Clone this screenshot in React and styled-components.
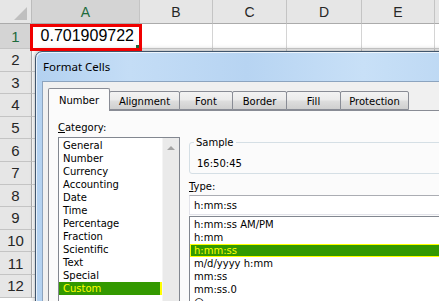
import React from "react";
import styled, { createGlobalStyle } from "styled-components";

const Global = createGlobalStyle`
  html, body { margin: 0; padding: 0; background: #fff; overflow: hidden; }
  #root { width: 439px; height: 301px; }
`;

const Page = styled.div`
  position: relative;
  width: 439px;
  height: 301px;
  overflow: hidden;
  background: #fff;
  font-family: "Liberation Sans", Arial, sans-serif;
`;

const Sheet = styled.div`
  display: grid;
  grid-template-columns: 32px 108px 73px 74px 75px 73px 1fr;
  grid-template-rows: 24px 25px repeat(11, 22.6px);
`;

const Corner = styled.div`
  position: relative;
  background: #e6e6e6;
  border-right: 1px solid #bcbcbc;
  border-bottom: 1px solid #ababab;
  box-sizing: border-box;
  overflow: hidden;
  &::after {
    content: "";
    position: absolute;
    right: 4px;
    bottom: 3px;
    border-left: 13px solid transparent;
    border-bottom: 13px solid #bfbfbf;
  }
`;

const ColHead = styled.div`
  display: flex;
  align-items: center;
  justify-content: center;
  box-sizing: border-box;
  background: ${(p) => (p.$active ? "#d4d4d4" : "#e6e6e6")};
  color: ${(p) => (p.$active ? "#1e6a3c" : "#262626")};
  border-right: 1px solid #c4c4c4;
  border-bottom: 1px solid #ababab;
  font-size: 14px;
`;

const RowHead = styled.div`
  display: flex;
  align-items: center;
  justify-content: center;
  box-sizing: border-box;
  background: ${(p) => (p.$active ? "#d4d4d4" : "#e6e6e6")};
  color: ${(p) => (p.$active ? "#1e6a3c" : "#262626")};
  border-right: 1px solid #ababab;
  border-bottom: 1px solid #c4c4c4;
  font-size: 15px;
`;

const Cell = styled.div`
  display: flex;
  align-items: center;
  justify-content: flex-end;
  box-sizing: border-box;
  padding-right: 5px;
  border-right: 1px solid #d4d4d4;
  border-bottom: 1px solid #d4d4d4;
  font-size: 16px;
  color: #000;
`;

const SelectBox = styled.div`
  position: absolute;
  left: 30px;
  top: 24px;
  width: 112px;
  height: 27px;
  box-sizing: border-box;
  border: 3px solid #f00000;
  z-index: 5;
  &::after {
    content: "";
    position: absolute;
    right: 0px;
    bottom: 0px;
    width: 3px;
    height: 3px;
    background: #1e6a3c;
  }
`;

/* ---------- Dialog ---------- */

const Window = styled.div`
  position: absolute;
  left: 35px;
  top: 51px;
  width: 470px;
  height: 290px;
  box-sizing: border-box;
  border: 1px solid #41566d;
  border-radius: 7px 7px 0 0;
  background: linear-gradient(90deg, #b3d1f0 0%, #c4ddf6 20%, #b7d4f2 45%, #c8e0f7 70%, #b6d3f1 100%);
  box-shadow: 0 -1px 5px rgba(0, 0, 0, 0.35), inset 1px 1px 0 rgba(255, 255, 255, 0.7);
  display: flex;
  flex-direction: column;
  padding: 0 0 0 6px;
  z-index: 3;
  font-family: "DejaVu Sans", Verdana, sans-serif;
  font-size: 10px;
  color: #000;
`;

const TitleBar = styled.div`
  height: 29px;
  display: flex;
  align-items: center;
  padding-left: 1px;
  font-family: "Noto Sans", "Open Sans", sans-serif;
  font-size: 11.5px;
  color: #000;
`;

const Client = styled.div`
  flex: 1;
  background: #f0f0f0;
  border: 1px solid #8ca4bf;
  border-right: none;
  border-bottom: none;
  padding: 6px 0 0 5px;
  display: flex;
  flex-direction: column;
`;

const TabStrip = styled.div`
  display: flex;
  align-items: flex-end;
  height: 22px;
  position: relative;
  z-index: 1;
`;

const Tab = styled.div`
  box-sizing: border-box;
  width: ${(p) => p.$w}px;
  height: ${(p) => (p.$active ? 23 : 19)}px;
  margin-left: -1px;
  margin-bottom: ${(p) => (p.$active ? -1 : 0)}px;
  &:first-child { margin-left: 0; }
  border: 1px solid #898c95;
  border-bottom: ${(p) => (p.$active ? "none" : "1px solid #898c95")};
  border-radius: 2px 2px 0 0;
  background: ${(p) =>
    p.$active
      ? "#fbfbfb"
      : "linear-gradient(180deg, #f3f3f3 0%, #ebebeb 45%, #dddddd 55%, #cfcfcf 100%)"};
  display: flex;
  align-items: center;
  justify-content: center;
  padding-top: ${(p) => (p.$active ? 0 : 1)}px;
  position: relative;
  z-index: ${(p) => (p.$active ? 2 : 1)};
`;

const TabPage = styled.div`
  flex: 1;
  border: 1px solid #898c95;
  border-right: none;
  border-bottom: none;
  background: #fbfbfb;
  display: flex;
  gap: 9px;
  padding: 10px 0 0 9px;
`;

const Column = styled.div`
  display: flex;
  flex-direction: column;
  flex: ${(p) => (p.$grow ? 1 : "none")};
  min-width: 0;
`;

const Label = styled.div`
  line-height: 13px;
  height: 13px;
  margin-top: ${(p) => p.$mt || 0}px;
  & u { text-decoration: underline; text-underline-offset: 1px; }
`;

const ListBox = styled.div`
  display: flex;
  box-sizing: border-box;
  width: 122px;
  height: 170px;
  margin-top: 3px;
  border: 1px solid #828790;
  background: #fff;
`;

const Items = styled.div`
  flex: 1;
  padding-top: 1px;
`;

const Item = styled.div`
  box-sizing: border-box;
  height: 13px;
  line-height: ${(p) => (p.$focus ? 11 : 13)}px;
  padding-left: ${(p) => (p.$focus ? 3 : 4)}px;
  white-space: nowrap;
  background: ${(p) => (p.$sel ? "#339900" : "transparent")};
  color: ${(p) => (p.$sel ? "#ffff00" : "#000")};
  border: ${(p) => (p.$focus ? "1px solid #ffff00" : "none")};
  border-right: ${(p) => (p.$edge ? "2px solid #ffff00" : p.$focus ? "1px solid #ffff00" : "none")};
`;

const ScrollBar = styled.div`
  width: 17px;
  background: #eaeaea;
  border-left: 1px solid #f4f4f4;
  display: flex;
  justify-content: center;
  padding-top: 8px;
  box-sizing: border-box;
`;

const UpArrow = styled.div`
  width: 0;
  height: 0;
  border-left: 4px solid transparent;
  border-right: 4px solid transparent;
  border-bottom: 4px solid #a3a3a3;
`;

const GroupBox = styled.fieldset`
  margin: 15px 0 0 0;
  padding: 8px 0 3px 7px;
  border: 1px solid #d5dfe5;
  border-radius: 3px;
  min-width: 0;
  line-height: 13px;
`;

const Legend = styled.legend`
  padding: 0 2px;
  margin-left: -3px;
  line-height: 13px;
`;

const TextBox = styled.div`
  box-sizing: border-box;
  height: 20px;
  margin-top: 2px;
  border: 1px solid #e2e3ea;
  border-top-color: #abadb3;
  background: #fff;
  display: flex;
  align-items: center;
  padding-left: 4px;
`;

const TypeList = styled.div`
  box-sizing: border-box;
  height: 120px;
  margin-top: 1px;
  border: 1px solid #828790;
  border-right: none;
  background: #fff;
  padding-top: 1px;
`;

const tabs = [
  ["Number", 62, true],
  ["Alignment", 71],
  ["Font", 54],
  ["Border", 55],
  ["Fill", 55],
  ["Protection", 69],
];

const categories = [
  "General",
  "Number",
  "Currency",
  "Accounting",
  "Date",
  "Time",
  "Percentage",
  "Fraction",
  "Scientific",
  "Text",
  "Special",
  "Custom",
];

const types = ["h:mm:ss AM/PM", "h:mm", "h:mm:ss", "m/d/yyyy h:mm", "mm:ss", "mm:ss.0", "@"];

const cols = ["A", "B", "C", "D", "E", ""];

export default function App() {
  const rows = [];
  for (let r = 1; r <= 12; r++) {
    rows.push(
      <React.Fragment key={r}>
        <RowHead $active={r === 1}>{r}</RowHead>
        {cols.map((c, i) => (
          <Cell key={i}>{r === 1 && i === 0 ? "0.701909722" : ""}</Cell>
        ))}
      </React.Fragment>
    );
  }
  return (
    <Page>
      <Global />
      <Sheet>
        <Corner />
        {cols.map((c, i) => (
          <ColHead key={i} $active={c === "A"}>
            {c}
          </ColHead>
        ))}
        {rows}
      </Sheet>
      <SelectBox />
      <Window>
        <TitleBar>Format Cells</TitleBar>
        <Client>
          <TabStrip>
            {tabs.map(([t, w, a]) => (
              <Tab key={t} $w={w} $active={a}>
                {t}
              </Tab>
            ))}
          </TabStrip>
          <TabPage>
            <Column>
              <Label>
                <u>C</u>ategory:
              </Label>
              <ListBox>
                <Items>
                  {categories.map((c) => (
                    <Item key={c} $sel={c === "Custom"} $edge={c === "Custom"}>
                      {c}
                    </Item>
                  ))}
                </Items>
                <ScrollBar>
                  <UpArrow />
                </ScrollBar>
              </ListBox>
            </Column>
            <Column $grow>
              <GroupBox>
                <Legend>Sample</Legend>
                16:50:45
              </GroupBox>
              <Label $mt={6}>
                <u>T</u>ype:
              </Label>
              <TextBox>h:mm:ss</TextBox>
              <TypeList>
                {types.map((t) => (
                  <Item key={t} $sel={t === "h:mm:ss"} $focus={t === "h:mm:ss"}>
                    {t}
                  </Item>
                ))}
              </TypeList>
            </Column>
          </TabPage>
        </Client>
      </Window>
    </Page>
  );
}
